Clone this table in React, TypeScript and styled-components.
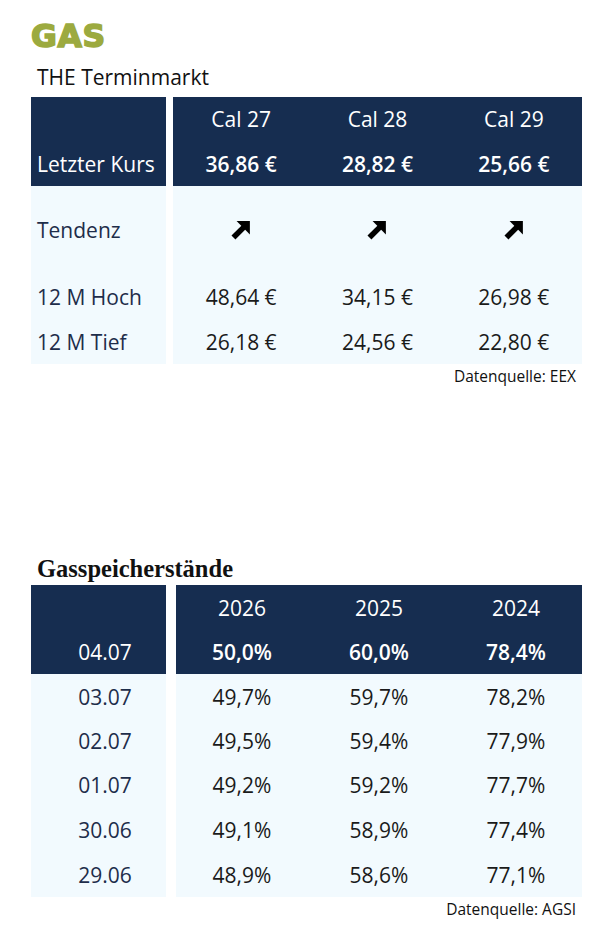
import styled, { createGlobalStyle } from 'styled-components';

const GlobalStyle = createGlobalStyle`
  body {
    margin: 0;
    background: #ffffff;
    font-family: 'Open Sans', 'Noto Sans', sans-serif;
  }
`;

const NAVY = '#162d50';
const LIGHT = '#f2fafe';

interface Block {
  label: string;
  cells: React.ReactNode[];
  height: number;
}

interface TableProps {
  head: Block[];
  body: Block[];
  gap: number;
  cols: string;
  centerLabels?: boolean;
}

// Tendenz-Pfeil
const UpArrow = () => (
  <svg width="20" height="20" viewBox="0 0 18 18">
    <polygon points="5,1 17,1 17,13" fill="#000" />
    <line x1="2.2" y1="15.8" x2="12.5" y2="5.5" stroke="#000" strokeWidth="5" />
  </svg>
);

const DataTable = ({ head, body, gap, cols, centerLabels }: TableProps) => (
  <StyledTable $gap={gap}>
    <Panel>
      <HeadBlock>
        {head.map((r, i) => (
          <LabelRow key={i} $h={r.height} $center={centerLabels} $light>
            {r.label}
          </LabelRow>
        ))}
      </HeadBlock>
      <BodyBlock>
        {body.map((r, i) => (
          <LabelRow key={i} $h={r.height} $center={centerLabels}>
            {r.label}
          </LabelRow>
        ))}
      </BodyBlock>
    </Panel>
    <Panel>
      <HeadBlock>
        {head.map((r, i) => (
          <ValueRow key={i} $h={r.height} $cols={cols} $bold={i === head.length - 1} $light>
            {r.cells.map((c, j) => (
              <span key={j}>{c}</span>
            ))}
          </ValueRow>
        ))}
      </HeadBlock>
      <BodyBlock>
        {body.map((r, i) => (
          <ValueRow key={i} $h={r.height} $cols={cols}>
            {r.cells.map((c, j) => (
              <span key={j}>{c}</span>
            ))}
          </ValueRow>
        ))}
      </BodyBlock>
    </Panel>
  </StyledTable>
);

const App = () => {
  const termin: TableProps = {
    gap: 7,
    cols: 'repeat(3, 1fr)',
    head: [
      { label: '', cells: ['Cal 27', 'Cal 28', 'Cal 29'], height: 44 },
      { label: 'Letzter Kurs', cells: ['36,86 €', '28,82 €', '25,66 €'], height: 45 },
    ],
    body: [
      { label: 'Tendenz', cells: [<UpArrow />, <UpArrow />, <UpArrow />], height: 88 },
      { label: '12 M Hoch', cells: ['48,64 €', '34,15 €', '26,98 €'], height: 45 },
      { label: '12 M Tief', cells: ['26,18 €', '24,56 €', '22,80 €'], height: 45 },
    ],
  };

  const speicher: TableProps = {
    gap: 10,
    cols: '132px 142px 1fr',
    centerLabels: true,
    head: [
      { label: '', cells: ['2026', '2025', '2024'], height: 45 },
      { label: '04.07', cells: ['50,0%', '60,0%', '78,4%'], height: 44 },
    ],
    body: [
      { label: '03.07', cells: ['49,7%', '59,7%', '78,2%'], height: 45 },
      { label: '02.07', cells: ['49,5%', '59,4%', '77,9%'], height: 44 },
      { label: '01.07', cells: ['49,2%', '59,2%', '77,7%'], height: 44 },
      { label: '30.06', cells: ['49,1%', '58,9%', '77,4%'], height: 45 },
      { label: '29.06', cells: ['48,9%', '58,6%', '77,1%'], height: 45 },
    ],
  };

  return (
    <>
      <GlobalStyle />
      <Page>
        <Logo>GAS</Logo>
        <SectionTitle>THE Terminmarkt</SectionTitle>
        <DataTable {...termin} />
        <Source>Datenquelle: EEX</Source>
        <SerifTitle>Gasspeicherstände</SerifTitle>
        <DataTable {...speicher} />
        <Source>Datenquelle: AGSI</Source>
      </Page>
    </>
  );
};

export default App;

const Page = styled.div`
  width: 551px;
  padding: 18px 0 20px 31px;
  display: flex;
  flex-direction: column;
`;

const Logo = styled.div`
  font-family: 'DejaVu Sans', sans-serif;
  font-weight: 700;
  font-size: 31.5px;
  line-height: 36px;
  height: 36px;
  color: #9caa3f;
  -webkit-text-stroke: 1.6px #9caa3f;
  letter-spacing: 0.6px;
`;

const SectionTitle = styled.div`
  font-size: 21px;
  line-height: 30px;
  margin: 8px 0 5px;
  padding-left: 6px;
  color: #111;
`;

const SerifTitle = styled.div`
  font-family: 'Liberation Serif', serif;
  font-weight: 700;
  font-size: 24.5px;
  line-height: 33px;
  margin-top: 164px;
  padding-left: 6px;
  color: #111;
`;

const StyledTable = styled.div<{ $gap: number }>`
  display: grid;
  grid-template-columns: 135px 1fr;
  column-gap: ${(p) => p.$gap}px;
`;

const Panel = styled.div`
  display: flex;
  flex-direction: column;
`;

const HeadBlock = styled.div`
  background: ${NAVY};
  color: #ffffff;
`;

const BodyBlock = styled.div`
  background: ${LIGHT};
`;

const LabelRow = styled.div<{ $h: number; $center?: boolean; $light?: boolean }>`
  height: ${(p) => p.$h}px;
  display: flex;
  align-items: center;
  justify-content: ${(p) => (p.$center ? 'center' : 'flex-start')};
  padding-left: ${(p) => (p.$center ? 13 : 6)}px;
  font-size: 21px;
  color: ${(p) => (p.$light ? '#ffffff' : '#1e2d4a')};
`;

const ValueRow = styled.div<{ $h: number; $cols: string; $bold?: boolean; $light?: boolean }>`
  height: ${(p) => p.$h}px;
  display: grid;
  grid-template-columns: ${(p) => p.$cols};
  align-items: center;
  justify-items: center;
  font-size: 21px;
  font-weight: ${(p) => (p.$bold ? 600 : 400)};
  color: ${(p) => (p.$light ? '#ffffff' : '#1a1a1a')};

  span {
    display: flex;
    align-items: center;
  }
`;

const Source = styled.div`
  height: 24px;
  line-height: 24px;
  text-align: right;
  padding-right: 6px;
  font-size: 15.5px;
  color: #111;
`;
